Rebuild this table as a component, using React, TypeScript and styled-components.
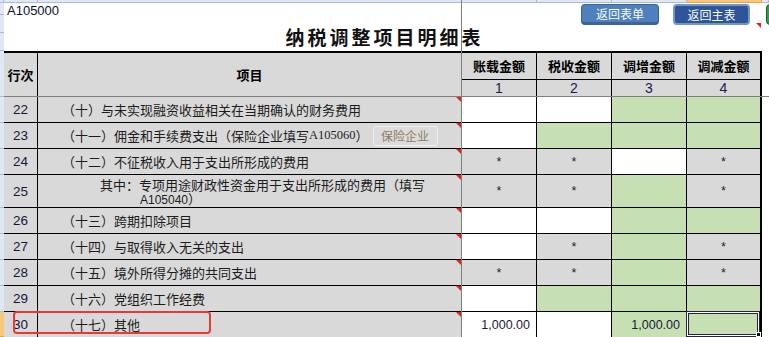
import React from "react";
import styled, { createGlobalStyle } from "styled-components";

const GlobalStyle = createGlobalStyle`
  html, body {
    margin: 0;
    padding: 0;
    background: #fff;
  }
  body {
    font-family: "Noto Sans CJK SC", "Liberation Sans", sans-serif;
  }
  * {
    box-sizing: border-box;
  }
`;

const COLS = "34px 424px 75px 75px 75px 75px";
const GRAY = "#d9d9d9";
const GREEN = "#c6e0b4";
const FREEZE = "#7f7f7f";

type Fill = "w" | "g" | "s";

const Page = styled.div`
  position: relative;
  width: 769px;
  height: 337px;
  overflow: hidden;
  background: #fff;
  display: flex;
  flex-direction: column;
`;

const ColumnBar = styled.div`
  flex: none;
  display: grid;
  grid-template-columns: 4px ${COLS} 1fr;
  height: 3px;
`;

const ColumnCell = styled.div<{ $active?: boolean }>`
  background: ${(p) => (p.$active ? "#f8c77c" : "#dfe8f4")};
  border-right: 1px solid ${(p) => (p.$active ? "#eea543" : "#a9bcd4")};
  border-bottom: 1px solid ${(p) => (p.$active ? "#eea543" : "#a9bcd4")};
`;

const Body = styled.div`
  flex: 1;
  display: flex;
  min-height: 0;
`;

const RowBar = styled.div`
  flex: none;
  width: 4px;
  display: flex;
  flex-direction: column;
`;

const RowMark = styled.div<{ $h?: number; $active?: boolean }>`
  flex: ${(p) => (p.$h ? "none" : "1")};
  height: ${(p) => (p.$h ? `${p.$h}px` : "auto")};
  background: ${(p) => (p.$active ? "#f8c77c" : "#dfe8f4")};
  border-bottom: 1px solid ${(p) => (p.$active ? "#eea543" : "#a9bcd4")};
`;

const Sheet = styled.div`
  flex: 1;
  display: flex;
  flex-direction: column;
`;

const TitleArea = styled.div`
  flex: none;
  height: 48px;
  display: flex;
  flex-direction: column;
`;

const TopLine = styled.div`
  height: 23px;
  display: flex;
  align-items: flex-start;
`;

const CodeLabel = styled.div`
  margin-left: 3px;
  font: 13px/15px "Liberation Sans", Arial, sans-serif;
  color: #0d0d2e;
`;

const Spacer = styled.div`
  flex: 1;
`;

const NavButton = styled.div<{ $dark?: boolean; $w: number }>`
  flex: none;
  width: ${(p) => p.$w}px;
  height: 21px;
  margin-top: 1px;
  margin-left: ${(p) => (p.$dark ? "14px" : "0")};
  border-radius: 4px;
  display: flex;
  align-items: center;
  justify-content: center;
  font-size: 12px;
  color: #fbfbee;
  background: ${(p) => (p.$dark ? "#2d5597" : "#4e80bd")};
  border: ${(p) => (p.$dark ? "2px solid #7196cc" : "1px solid #3d6494")};
  border-bottom-width: ${(p) => (p.$dark ? "2px" : "3px")};
`;

const CommentMark = styled.div`
  flex: none;
  width: 0;
  height: 0;
  margin-left: 6px;
  margin-top: 20px;
  border-top: 5px solid #e8201a;
  border-left: 5px solid transparent;
`;

const GreenTab = styled.div`
  flex: none;
  width: 12px;
  height: 21px;
  margin-top: 1px;
  margin-left: 5px;
  margin-right: -9px;
  border-radius: 4px 0 0 4px;
  background: #2f9e48;
  border: 1px solid #1b5e2a;
`;

const Title = styled.div`
  width: 758px;
  padding-left: 3px;
  text-align: center;
  font-size: 19px;
  line-height: 22px;
  font-weight: 700;
  letter-spacing: 3px;
  color: #111;
`;

const Table = styled.div`
  display: grid;
  grid-template-columns: ${COLS};
  grid-template-rows: 27px 17px repeat(3, 26px) 33px repeat(5, 26px);
  width: 758px;
  border-top: 2px solid #000;
`;

const HeadCell = styled.div<{ $span?: boolean; $sub?: boolean; $freeze?: boolean; $last?: boolean }>`
  grid-row: ${(p) => (p.$span ? "span 2" : "auto")};
  background: ${GRAY};
  display: flex;
  align-items: center;
  justify-content: center;
  border-right: ${(p) => (p.$last ? "2px" : "1px")} solid ${(p) => (p.$freeze ? FREEZE : "#000")};
  border-bottom: 1px solid ${(p) => (p.$span || p.$sub ? FREEZE : "#000")};
  font-size: ${(p) => (p.$sub ? "14px" : "13px")};
  font-weight: ${(p) => (p.$sub ? 400 : 700)};
  font-family: ${(p) =>
    p.$sub ? '"Liberation Sans", Arial, sans-serif' : '"Noto Sans CJK SC", sans-serif'};
  line-height: 16px;
  color: ${(p) => (p.$sub ? "#1b1b55" : "#000")};
`;

const NoCell = styled.div`
  background: ${GRAY};
  border-right: 1px solid #000;
  border-bottom: 1px solid #000;
  display: flex;
  align-items: center;
  justify-content: center;
  font: 13.5px "Liberation Sans", Arial, sans-serif;
  color: #15153d;
`;

const LabelCell = styled.div<{ $pad?: number }>`
  position: relative;
  background: ${GRAY};
  border-right: 1px solid ${FREEZE};
  border-bottom: 1px solid #000;
  display: flex;
  align-items: center;
  padding-left: ${(p) => p.$pad ?? 24}px;
  font-size: 13px;
  color: #1c1c1c;
  white-space: nowrap;
`;

const TwoLines = styled.div`
  align-self: flex-start;
  display: flex;
  flex-direction: column;
  padding-top: 3px;
`;

const Line = styled.div<{ $pad: number }>`
  height: 14px;
  line-height: 14px;
  padding-left: ${(p) => p.$pad}px;
`;

const Latin = styled.span<{ $serif?: boolean }>`
  font-family: ${(p) =>
    p.$serif ? '"Liberation Serif", serif' : '"Liberation Sans", Arial, sans-serif'};
  font-size: ${(p) => (p.$serif ? "12.5px" : "12px")};
`;

const CornerFlag = styled.i`
  position: absolute;
  top: 0;
  right: 0;
  width: 0;
  height: 0;
  border-top: 5px solid #ee1c14;
  border-left: 5px solid transparent;
`;

const InsureButton = styled.div`
  margin-left: 4px;
  width: 65px;
  height: 20px;
  display: flex;
  align-items: center;
  justify-content: center;
  font-size: 12px;
  color: #8c7c62;
  background: #dcdcdc;
  border: 1px solid #eeeeee;
  border-radius: 3px;
`;

const AmountCell = styled.div<{ $fill: Fill; $last?: boolean; $value?: boolean }>`
  position: relative;
  background: ${(p) => (p.$fill === "g" ? GREEN : p.$fill === "s" ? GRAY : "#fff")};
  border-right: ${(p) => (p.$last ? "2px" : "1px")} solid #000;
  border-bottom: 1px solid #000;
  display: flex;
  align-items: center;
  justify-content: ${(p) => (p.$value ? "flex-end" : "center")};
  padding-right: ${(p) => (p.$value ? "6px" : "0")};
  font: 12.5px "Liberation Sans", Arial, sans-serif;
  color: #1a1a3a;
`;

const Selection = styled.div`
  position: absolute;
  top: -1px;
  left: -1px;
  right: 0;
  bottom: 0;
  border: 1px solid #2b2140;
  box-shadow: inset 0 0 0 1px #fff, inset 0 0 0 2px #2b2140;
`;

const FillHandle = styled.div`
  position: absolute;
  right: -2px;
  bottom: -1px;
  width: 5px;
  height: 5px;
  background: #111;
  border: 1px solid #fff;
`;

const FreezeV = styled.div`
  position: absolute;
  left: 461px;
  top: 0;
  bottom: 0;
  width: 1px;
  background: ${FREEZE};
`;

const FreezeH = styled.div`
  position: absolute;
  left: 4px;
  right: 0;
  top: 96px;
  height: 1px;
  background: ${FREEZE};
`;

const Highlight = styled.div`
  position: absolute;
  left: 13px;
  top: 311px;
  width: 198px;
  height: 23px;
  border: 2px solid #e63b34;
  border-radius: 4px;
`;

type Row = {
  no: number;
  label: React.ReactNode;
  cells: [Fill, string?][];
  two?: boolean;
};

const rows: Row[] = [
  { no: 22, label: "（十）与未实现融资收益相关在当期确认的财务费用", cells: [["w"], ["w"], ["g"], ["g"]] },
  {
    no: 23,
    label: (
      <>
        （十一）佣金和手续费支出（保险企业填写<Latin $serif>A105060</Latin>）
        <InsureButton>保险企业</InsureButton>
      </>
    ),
    cells: [["w"], ["g"], ["g"], ["g"]],
  },
  { no: 24, label: "（十二）不征税收入用于支出所形成的费用", cells: [["s", "*"], ["s", "*"], ["w"], ["s", "*"]] },
  {
    no: 25,
    two: true,
    label: (
      <TwoLines>
        <Line $pad={0}>其中：专项用途财政性资金用于支出所形成的费用（填写</Line>
        <Line $pad={40}>
          <Latin>A105040</Latin>）
        </Line>
      </TwoLines>
    ),
    cells: [["s", "*"], ["s", "*"], ["g"], ["s", "*"]],
  },
  { no: 26, label: "（十三）跨期扣除项目", cells: [["w"], ["w"], ["g"], ["g"]] },
  { no: 27, label: "（十四）与取得收入无关的支出", cells: [["w"], ["s", "*"], ["g"], ["s", "*"]] },
  { no: 28, label: "（十五）境外所得分摊的共同支出", cells: [["s", "*"], ["s", "*"], ["g"], ["s", "*"]] },
  { no: 29, label: "（十六）党组织工作经费", cells: [["w"], ["g"], ["g"], ["g"]] },
  { no: 30, label: "（十七）其他", cells: [["w", "1,000.00"], ["w"], ["g", "1,000.00"], ["g"]] },
];

const heads = ["账载金额", "税收金额", "调增金额", "调减金额"];

export default function App() {
  return (
    <Page>
      <GlobalStyle />
      <ColumnBar>
        <ColumnCell />
        <ColumnCell />
        <ColumnCell />
        <ColumnCell />
        <ColumnCell />
        <ColumnCell />
        <ColumnCell $active />
        <ColumnCell />
      </ColumnBar>
      <Body>
        <RowBar>
          {[12, 18, 18, 46, 26, 26, 26, 33, 26, 26, 26, 26].map((h, i) => (
            <RowMark key={i} $h={h} />
          ))}
          <RowMark $active />
        </RowBar>
        <Sheet>
          <TitleArea>
            <TopLine>
              <CodeLabel>A105000</CodeLabel>
              <Spacer />
              <NavButton $w={78}>返回表单</NavButton>
              <NavButton $w={77} $dark>
                返回主表
              </NavButton>
              <CommentMark />
              <GreenTab />
            </TopLine>
            <Title>纳税调整项目明细表</Title>
          </TitleArea>
          <Table>
            <HeadCell $span>行次</HeadCell>
            <HeadCell $span $freeze>
              项目
            </HeadCell>
            {heads.map((h, i) => (
              <HeadCell key={h} $last={i === 3}>
                {h}
              </HeadCell>
            ))}
            {[1, 2, 3, 4].map((n) => (
              <HeadCell key={n} $sub $last={n === 4}>
                {n}
              </HeadCell>
            ))}
            {rows.map((r) => (
              <React.Fragment key={r.no}>
                <NoCell>{r.no}</NoCell>
                <LabelCell $pad={r.two ? 62 : 24}>
                  {r.label}
                  <CornerFlag />
                </LabelCell>
                {r.cells.map(([fill, text], i) => (
                  <AmountCell key={i} $fill={fill} $last={i === 3} $value={!!text && text !== "*"}>
                    {text}
                    {r.no === 30 && i === 3 && (
                      <Selection>
                        <FillHandle />
                      </Selection>
                    )}
                  </AmountCell>
                ))}
              </React.Fragment>
            ))}
          </Table>
        </Sheet>
      </Body>
      <FreezeV />
      <FreezeH />
      <Highlight />
    </Page>
  );
}
